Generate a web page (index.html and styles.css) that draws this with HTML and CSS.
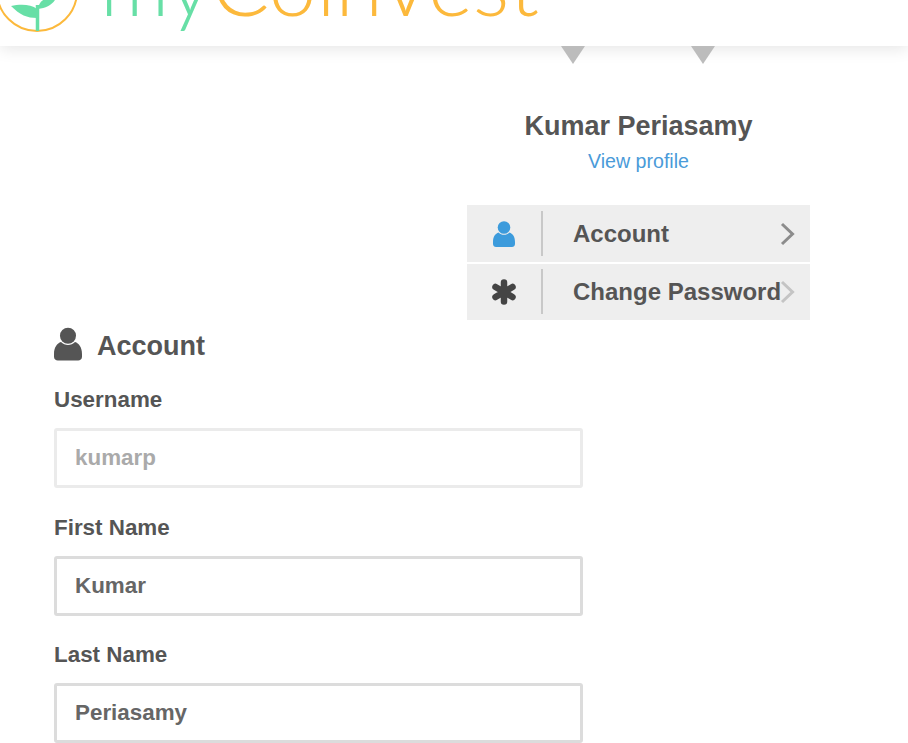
FILE: index.html
```html
<!DOCTYPE html>
<html lang="en">
<head>
<meta charset="utf-8">
<title>myCoinVest - Account</title>
<link rel="stylesheet" href="styles.css">
</head>
<body>
<header class="topbar">
  <svg class="logo-mark" width="80" height="34" viewBox="0 0 80 34" aria-hidden="true">
    <circle cx="37" cy="-9" r="40" fill="none" stroke="#fcb93c" stroke-width="2"/>
    <path d="M37.500 31V5" stroke="#67dfa6" stroke-width="3.500" fill="none"/>
    <path d="M11 6C20 4 31 4 37 9V18C27 18 20 15 11 6Z" fill="#67dfa6"/>
    <path d="M38 9C39 2 42 -2 57 -4C54 4 47 8 38 9Z" fill="#67dfa6"/>
  </svg>
  <div class="logo-text"><span class="logo-my">my</span><span class="logo-coin">CoinVest</span></div>
</header>
<div class="pointer pointer-a"></div>
<div class="pointer pointer-b"></div>
<main class="page">
  <section class="profile">
    <h1 class="profile-name">Kumar Periasamy</h1>
    <a class="profile-link" href="#">View profile</a>
    <nav class="menu">
      <a class="menu-row" href="#">
        <span class="menu-icon">
          <svg width="22" height="26" viewBox="0 0 22 26"><circle cx="11" cy="6.500" r="6.300" fill="#3c9bdc"/><path d="M0 21C0 15.500 2.500 12.500 5.500 11.500C7 13 9 13.800 11 13.800C13 13.800 15 13 16.500 11.500C19.500 12.500 22 15.500 22 21V23C22 25 20.500 26 19 26H3C1.500 26 0 25 0 23Z" fill="#3c9bdc"/></svg>
        </span>
        <span class="menu-label">Account</span>
        <svg class="chevron" width="15" height="24" viewBox="0 0 15 24"><path d="M2 2L12.500 12L2 22" fill="none" stroke="#8c8c8c" stroke-width="3"/></svg>
      </a>
      <a class="menu-row menu-row-short" href="#">
        <span class="menu-icon">
          <svg width="26" height="26" viewBox="0 0 26 26"><path d="M13 13V3.500M13 13V22.500M13 13L4.500 8M13 13L21.500 8M13 13L4.500 18M13 13L21.500 18" stroke="#444" stroke-width="6.500" stroke-linecap="round" fill="none"/></svg>
        </span>
        <span class="menu-label">Change Password</span>
        <svg class="chevron chevron-tight" width="15" height="24" viewBox="0 0 15 24"><path d="M2 2L12.500 12L2 22" fill="none" stroke="#c4c4c4" stroke-width="3"/></svg>
      </a>
    </nav>
  </section>
  <section class="account">
    <h2 class="account-title">
      <svg class="account-icon" width="28" height="34" viewBox="0 0 22 26"><circle cx="11" cy="6.500" r="6.300" fill="#555"/><path d="M0 21C0 15.500 2.500 12.500 5.500 11.500C7 13 9 13.800 11 13.800C13 13.800 15 13 16.500 11.500C19.500 12.500 22 15.500 22 21V23C22 25 20.500 26 19 26H3C1.500 26 0 25 0 23Z" fill="#555"/></svg>
      Account
    </h2>
    <form class="form">
      <div class="field">
        <label class="field-label" for="username">Username</label>
        <input class="field-input" id="username" value="kumarp" disabled>
      </div>
      <div class="field">
        <label class="field-label" for="first">First Name</label>
        <input class="field-input" id="first" value="Kumar">
      </div>
      <div class="field">
        <label class="field-label" for="last">Last Name</label>
        <input class="field-input" id="last" value="Periasamy">
      </div>
    </form>
  </section>
</main>
</body>
</html>
```
FILE: styles.css
```css
* { box-sizing: border-box; }
html, body { height: 743px; overflow: hidden; }
body {
  margin: 0;
  background: #fff;
  color: #555;
  font-family: "Liberation Sans", Arial, sans-serif;
  position: relative;
}
.topbar {
  height: 46px;
  background: #fff;
  display: flex;
  align-items: flex-end;
  overflow: hidden;
  padding-bottom: 33px;
  gap: 20px;
  box-shadow: 0 3px 16px rgba(0, 0, 0, 0.1);
  position: relative;
  z-index: 1;
}
.logo-mark { flex: none; align-self: flex-start; }
.logo-text {
  font-family: Lato, sans-serif;
  font-weight: 300;
  font-size: 86px;
  line-height: 60px;
  white-space: nowrap;
}
.logo-my { color: #67dfa6; }
.logo-coin { color: #fcb93c; }
.pointer {
  position: absolute;
  top: 46px;
  width: 0;
  height: 0;
  border-left: 12.500px solid transparent;
  border-right: 12.500px solid transparent;
  border-top: 18px solid #bcbcbc;
  z-index: 2;
}
.pointer-a { left: 561px; }
.pointer-b { left: 691px; }
.page { padding: 0 0 0 54px; }
.profile {
  margin-left: 413px;
  width: 343px;
  display: flex;
  flex-direction: column;
  align-items: center;
  padding-top: 63px;
}
.profile-name {
  margin: 0;
  font-size: 27px;
  line-height: 34px;
  font-weight: 700;
  color: #555;
}
.profile-link {
  margin-top: 6px;
  font-size: 19.600px;
  line-height: 24px;
  color: #4a9bd9;
  text-decoration: none;
}
.menu {
  margin-top: 32px;
  width: 100%;
  display: flex;
  flex-direction: column;
  gap: 2px;
}
.menu-row {
  height: 57px;
  background: #eee;
  display: flex;
  align-items: center;
  text-decoration: none;
  color: #555;
}
.menu-row-short { height: 56px; }
.menu-row-short .menu-icon { margin-bottom: 1px; }
.menu-icon {
  width: 76px;
  height: 45px;
  flex: none;
  display: flex;
  align-items: center;
  justify-content: center;
  border-right: 2px solid #c8c8c8;
}
.menu-label {
  margin-left: 30px;
  font-size: 24px;
  font-weight: 700;
  flex: 1;
  white-space: nowrap;
}
.chevron { flex: none; margin-right: 15px; }
.chevron-tight { margin-left: -1px; }
.account { width: 529px; margin-top: 6px; }
.account-title {
  margin: 0;
  height: 40px;
  display: flex;
  align-items: center;
  gap: 15px;
  font-size: 27px;
  font-weight: 700;
}
.account-icon { margin-bottom: 4px; }
.form { display: flex; flex-direction: column; gap: 26.500px; margin-top: 21px; }
.field { display: flex; flex-direction: column; gap: 15px; }
.field-label { font-size: 22.400px; line-height: 26px; font-weight: 700; }
.field-input {
  width: 100%;
  height: 60px;
  border: 3px solid #dcdcdc;
  border-radius: 3px;
  padding: 0 18px;
  font: 700 22.400px "Liberation Sans", Arial, sans-serif;
  color: #666;
  background: #fff;
}
.field-input:disabled { border-color: #ebebeb; color: #aaa; }
```
